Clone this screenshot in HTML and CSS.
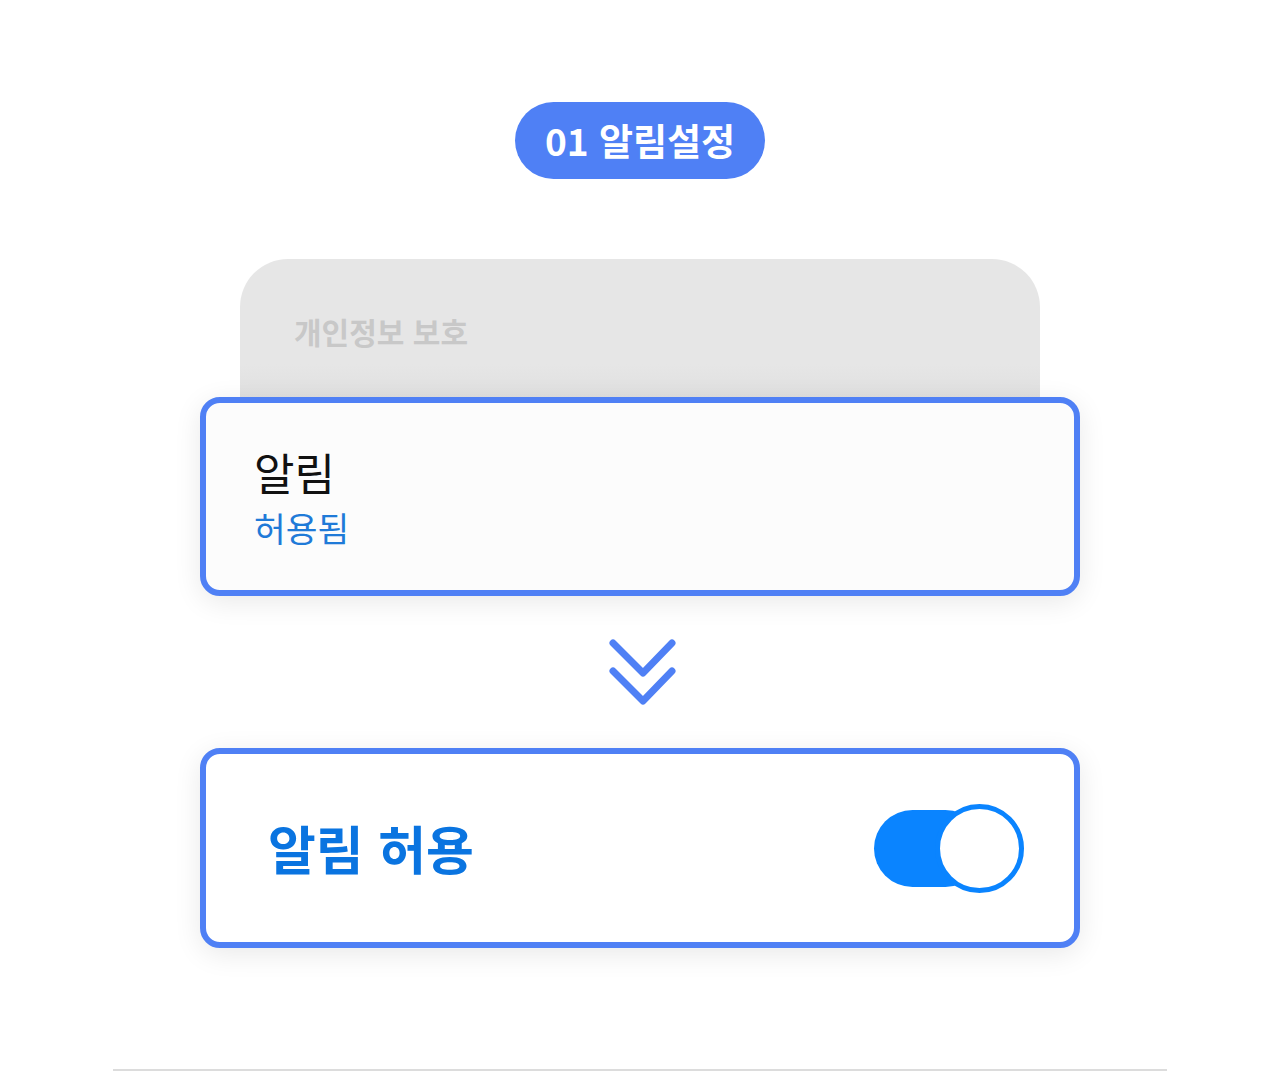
FILE: index.html
```html
<!DOCTYPE html>
<html lang="ko">
<head>
<meta charset="utf-8">
<title>01 알림설정</title>
<link rel="stylesheet" href="styles.css">
</head>
<body>
<main class="page">
  <div class="badge">01 알림설정</div>
  <section class="stack">
    <div class="back-card"><span class="back-title">개인정보 보호</span></div>
    <div class="card card-info">
      <div class="info-title">알림</div>
      <div class="info-sub">허용됨</div>
    </div>
  </section>
  <div class="chevron">
    <svg width="74" height="72" viewBox="0 0 74 72" fill="none" stroke="#4f80f5" stroke-width="7" stroke-linecap="round" stroke-linejoin="round">
      <path d="M7 7 L37 37 L66 7"/>
      <path d="M7 35 L37 65 L66 35"/>
    </svg>
  </div>
  <section class="card card-toggle">
    <div class="toggle-label">알림 허용</div>
    <div class="toggle">
      <span class="knob"></span>
    </div>
  </section>
  <hr class="divider">
</main>
</body>
</html>
```
FILE: styles.css
```css
html, body {
  margin: 0;
  padding: 0;
  background: #ffffff;
}
body {
  font-family: "Noto Sans CJK KR", "Noto Sans", sans-serif;
  width: 1280px;
  height: 1072px;
  overflow: hidden;
}
.page {
  display: flex;
  flex-direction: column;
  align-items: center;
  padding-top: 102px;
}
.badge {
  height: 77px;
  line-height: 77px;
  padding: 0 30px;
  border-radius: 39px;
  background: #4f80f5;
  color: #ffffff;
  font-size: 37px;
  font-weight: 700;
  letter-spacing: 0;
}
.stack {
  width: 880px;
  margin-top: 80px;
  display: flex;
  flex-direction: column;
}
.back-card {
  margin: 0 40px;
  height: 150px;
  border-radius: 48px 48px 0 0;
  background: linear-gradient(#e6e6e6 0%, #e6e6e6 70%, #dedede 100%);
  padding: 52px 0 0 54px;
  box-sizing: border-box;
}
.back-title {
  font-size: 30px;
  font-weight: 700;
  color: #c8c8c8;
  line-height: 40px;
  display: block;
}
.card {
  box-sizing: border-box;
  width: 880px;
  border: 6px solid #4f80f5;
  border-radius: 20px;
  box-shadow: 0 6px 28px rgba(0, 0, 0, 0.09);
  position: relative;
}
.card-info {
  margin-top: -12px;
  height: 199px;
  background: #fcfcfc;
  padding: 41px 0 0 48px;
}
.info-title {
  font-size: 44px;
  line-height: 56px;
  color: #111111;
}
.info-sub {
  font-size: 34.5px;
  line-height: 46px;
  color: #1f7ad8;
  margin-top: 4px;
}
.chevron {
  margin-top: 40px;
  height: 72px;
  padding-left: 6px;
}
.chevron svg {
  display: block;
}
.card-toggle {
  margin-top: 40px;
  height: 200px;
  background: #ffffff;
  display: flex;
  align-items: center;
  justify-content: space-between;
  padding: 0 50px 0 62px;
}
.toggle-label {
  font-size: 52px;
  font-weight: 700;
  color: #0a74e0;
  line-height: 60px;
}
.toggle {
  position: relative;
  width: 150px;
  height: 89px;
}
.toggle::before {
  content: "";
  position: absolute;
  left: 0;
  top: 6px;
  width: 110px;
  height: 77px;
  border-radius: 39px;
  background: #0a84ff;
}
.knob {
  position: absolute;
  right: 0;
  top: 0;
  width: 89px;
  height: 89px;
  box-sizing: border-box;
  border-radius: 50%;
  border: 5px solid #0a84ff;
  background: #ffffff;
}
.divider {
  width: 1054px;
  height: 2px;
  border: 0;
  margin: 121px 0 0 0;
  background: #dcdcdc;
}
```
